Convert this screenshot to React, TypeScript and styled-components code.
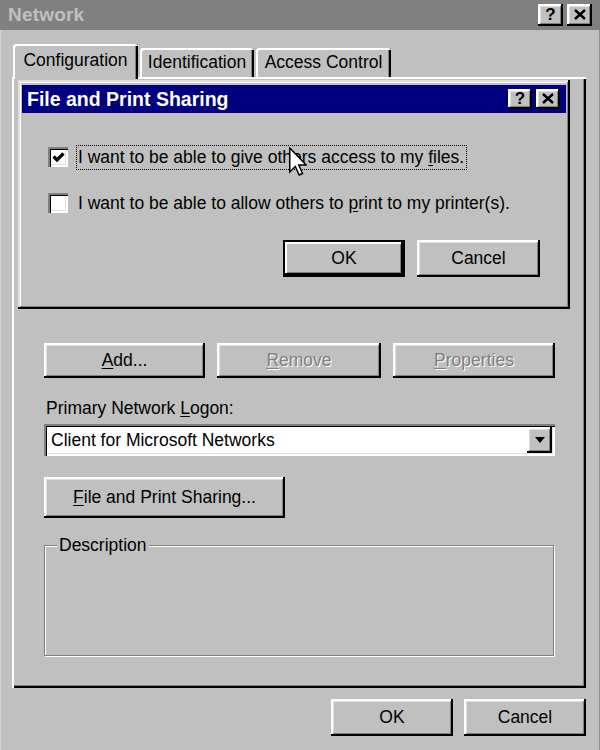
import React from "react";
import styled, { createGlobalStyle, css } from "styled-components";

const Global = createGlobalStyle`
  html, body { margin: 0; padding: 0; background: #c0c0c0; }
  body { font-family: "Liberation Sans", Arial, sans-serif; font-size: 17.5px; color: #000; }
  * { box-sizing: border-box; }
`;

const raised = css`
  background: #c0c0c0;
  box-shadow: inset -2px -2px 0 #000, inset 2px 2px 0 #fff, inset -3px -3px 0 #808080, inset 3px 3px 0 #dfdfdf;
`;

const Window = styled.div`
  position: relative;
  width: 600px;
  height: 750px;
  background: #c0c0c0;
  display: flex;
  flex-direction: column;
  overflow: hidden;
  box-shadow: inset -1px 0 0 #909090, inset 1px 0 0 #d4d4d4;
`;

const TitleBar = styled.div<{ $active?: boolean }>`
  height: 30px;
  flex: none;
  display: flex;
  align-items: center;
  justify-content: space-between;
  padding: 0 8px 0 8px;
  background: ${(p) => (p.$active ? "#000080" : "#808080")};
`;

const TitleText = styled.span`
  font-weight: bold;
  font-size: 19px;
  color: #c0c0c0;
  letter-spacing: 0.2px;
`;

const TitleButtons = styled.div`
  display: flex;
  gap: 4px;
`;

const TitleButton = styled.div<{ $small?: boolean }>`
  ${raised};
  width: ${(p) => (p.$small ? 24 : 25)}px;
  height: ${(p) => (p.$small ? 20 : 22)}px;
  display: flex;
  align-items: center;
  justify-content: center;
  font-weight: bold;
  font-size: 17px;
  line-height: 1;
  color: #000;
  padding-bottom: 1px;
`;

const Body = styled.div`
  flex: 1;
  display: flex;
  flex-direction: column;
  padding: 14px 14px 0 12px;
`;

const TabRow = styled.div`
  display: flex;
  align-items: flex-end;
  height: 33px;
  position: relative;
  z-index: 1;
`;

const Tab = styled.div<{ $selected?: boolean; $w: number }>`
  width: ${(p) => p.$w}px;
  height: ${(p) => (p.$selected ? 35 : 29)}px;
  margin-left: ${(p) => (p.$selected ? 1 : 2)}px;
  margin-bottom: ${(p) => (p.$selected ? -2 : 0)}px;
  display: flex;
  align-items: center;
  justify-content: center;
  background: #c0c0c0;
  border-top-left-radius: 3px;
  border-top-right-radius: 3px;
  box-shadow: inset 2px 2px 0 #fff, inset -2px 0 0 #000, inset -3px 0 0 #808080;
  padding-bottom: ${(p) => (p.$selected ? 3 : 0)}px;
`;

const Panel = styled.div`
  height: 611px;
  display: flex;
  flex-direction: column;
  padding: 266px 31px 0 32px;
  box-shadow: inset 2px 2px 0 #fff, inset -2px -2px 0 #000, inset -3px -3px 0 #808080;
`;

const ButtonRow = styled.div`
  display: grid;
  grid-template-columns: 161px 164px 162px;
  column-gap: 12px;
`;

const Button = styled.div<{ $w?: number; $h?: number; $disabled?: boolean; $default?: boolean }>`
  ${raised};
  width: ${(p) => (p.$w ? `${p.$w}px` : "auto")};
  height: ${(p) => p.$h ?? 35}px;
  display: flex;
  align-items: center;
  justify-content: center;
  color: ${(p) => (p.$disabled ? "#808080" : "#000")};
  text-shadow: ${(p) => (p.$disabled ? "1px 1px 0 #fff" : "none")};
  ${(p) =>
    p.$default &&
    css`
      box-shadow: inset 0 0 0 2px #000, inset -4px -4px 0 #000, inset 4px 4px 0 #fff, inset -5px -5px 0 #808080;
    `}
`;

const U = styled.span`
  text-decoration: underline;
  text-underline-offset: 2px;
`;

const FieldLabel = styled.div`
  margin-top: 20px;
  line-height: 20px;
  height: 20px;
  padding-left: 2px;
`;

const Combo = styled.div`
  margin-top: 6px;
  height: 32px;
  display: flex;
  align-items: center;
  justify-content: space-between;
  background: #fff;
  padding: 3px 3px 3px 7px;
  box-shadow: inset 2px 2px 0 #808080, inset 3px 3px 0 #000, inset -2px -2px 0 #fff, inset -3px -3px 0 #dfdfdf;
`;

const ComboButton = styled.div`
  ${raised};
  width: 25px;
  height: 26px;
  display: flex;
  align-items: center;
  justify-content: center;
`;

const WideButtonRow = styled.div`
  margin-top: 21px;
  display: flex;
`;

const Group = styled.div`
  position: relative;
  margin-top: 27px;
  height: 111px;
  width: 510px;
  border: 1px solid #808080;
  box-shadow: inset 1px 1px 0 #fff, 1px 1px 0 #fff;
`;

const Legend = styled.span`
  position: absolute;
  left: 12px;
  top: -11px;
  padding: 0 2px;
  background: #c0c0c0;
  line-height: 20px;
`;

const Footer = styled.div`
  display: flex;
  justify-content: flex-end;
  gap: 11px;
  margin-top: 11px;
`;

const Dialog = styled.div`
  position: absolute;
  left: 18px;
  top: 80px;
  width: 552px;
  height: 229px;
  background: #c0c0c0;
  padding: 5px 4px 4px 4px;
  display: flex;
  flex-direction: column;
  box-shadow: inset -2px -2px 0 #000, inset 2px 2px 0 #dfdfdf, inset -3px -3px 0 #808080, inset 3px 3px 0 #fff;
  z-index: 2;
`;

const DialogTitle = styled(TitleBar)`
  height: 28px;
  padding: 0 6px 0 5px;
`;

const DialogTitleText = styled.span`
  font-weight: bold;
  font-size: 19.5px;
  color: #fff;
`;

const DialogBody = styled.div`
  display: flex;
  flex-direction: column;
  padding: 34px 26px 0 26px;
`;

const CheckRow = styled.div<{ $gap?: number }>`
  display: flex;
  align-items: center;
  height: 20px;
  margin-top: ${(p) => p.$gap ?? 0}px;
`;

const CheckBox = styled.div`
  width: 20px;
  height: 20px;
  background: #fff;
  flex: none;
  display: flex;
  align-items: center;
  justify-content: center;
  box-shadow: inset 2px 2px 0 #808080, inset 3px 3px 0 #000, inset -2px -2px 0 #fff, inset -3px -3px 0 #dfdfdf;
`;

const CheckText = styled.span<{ $focus?: boolean }>`
  margin-left: 9px;
  padding: 1px 2px 2px 1px;
  line-height: 20px;
  outline: ${(p) => (p.$focus ? "1px dotted #000" : "none")};
`;

const DialogButtons = styled.div`
  display: flex;
  justify-content: flex-end;
  gap: 12px;
  margin-top: 27px;
`;

const Cursor = styled.svg`
  position: absolute;
  left: 289px;
  top: 147px;
  z-index: 3;
`;

const CloseIcon = () => (
  <svg width="12" height="11" viewBox="0 0 12 11">
    <path d="M1 1 L11 10 M11 1 L1 10" stroke="#000" strokeWidth="2.4" />
  </svg>
);

const Check = () => (
  <svg width="13" height="11" viewBox="0 0 13 11">
    <path d="M1.5 4.5 L5 8 L11.5 1.5" stroke="#000" strokeWidth="3.2" fill="none" />
  </svg>
);

export default function App() {
  return (
    <>
      <Global />
      <Window>
        <TitleBar>
          <TitleText>Network</TitleText>
          <TitleButtons>
            <TitleButton>?</TitleButton>
            <TitleButton>
              <CloseIcon />
            </TitleButton>
          </TitleButtons>
        </TitleBar>
        <Body>
          <TabRow>
            <Tab $selected $w={125}>Configuration</Tab>
            <Tab $w={114}>Identification</Tab>
            <Tab $w={135}>Access Control</Tab>
          </TabRow>
          <Panel>
            <ButtonRow>
              <Button>
                <span>
                  <U>A</U>dd...
                </span>
              </Button>
              <Button $disabled>
                <span>
                  <U>R</U>emove
                </span>
              </Button>
              <Button $disabled>
                <span>
                  <U>P</U>roperties
                </span>
              </Button>
            </ButtonRow>
            <FieldLabel>
              Primary Network <U>L</U>ogon:
            </FieldLabel>
            <Combo>
              <span>Client for Microsoft Networks</span>
              <ComboButton>
                <svg width="10" height="6" viewBox="0 0 10 6">
                  <path d="M0 0 H10 L5 6 Z" fill="#000" />
                </svg>
              </ComboButton>
            </Combo>
            <WideButtonRow>
              <Button $w={241} $h={41}>
                <span>
                  <U>F</U>ile and Print Sharing...
                </span>
              </Button>
            </WideButtonRow>
            <Group>
              <Legend>Description</Legend>
            </Group>
          </Panel>
          <Footer>
            <Button $w={122} $h={37}>OK</Button>
            <Button $w={122} $h={37}>Cancel</Button>
          </Footer>
        </Body>

        <Dialog>
          <DialogTitle $active>
            <DialogTitleText>File and Print Sharing</DialogTitleText>
            <TitleButtons>
              <TitleButton $small>?</TitleButton>
              <TitleButton $small>
                <CloseIcon />
              </TitleButton>
            </TitleButtons>
          </DialogTitle>
          <DialogBody>
            <CheckRow>
              <CheckBox>
                <Check />
              </CheckBox>
              <CheckText $focus>
                I want to be able to give others access to my <U>f</U>iles.
              </CheckText>
            </CheckRow>
            <CheckRow $gap={26}>
              <CheckBox />
              <CheckText>
                I want to be able to allow others to <U>p</U>rint to my printer(s).
              </CheckText>
            </CheckRow>
            <DialogButtons>
              <Button $w={122} $h={37} $default>OK</Button>
              <Button $w={123} $h={37}>Cancel</Button>
            </DialogButtons>
          </DialogBody>
        </Dialog>

        <Cursor width="18" height="29" viewBox="0 0 12 19">
          <path
            d="M0.5 0.5 L0.5 16.5 L4.2 12.8 L6.8 18.5 L9 17.5 L6.5 11.8 L11.5 11.8 Z"
            fill="#fff"
            stroke="#000"
            strokeWidth="1"
          />
        </Cursor>
      </Window>
    </>
  );
}
